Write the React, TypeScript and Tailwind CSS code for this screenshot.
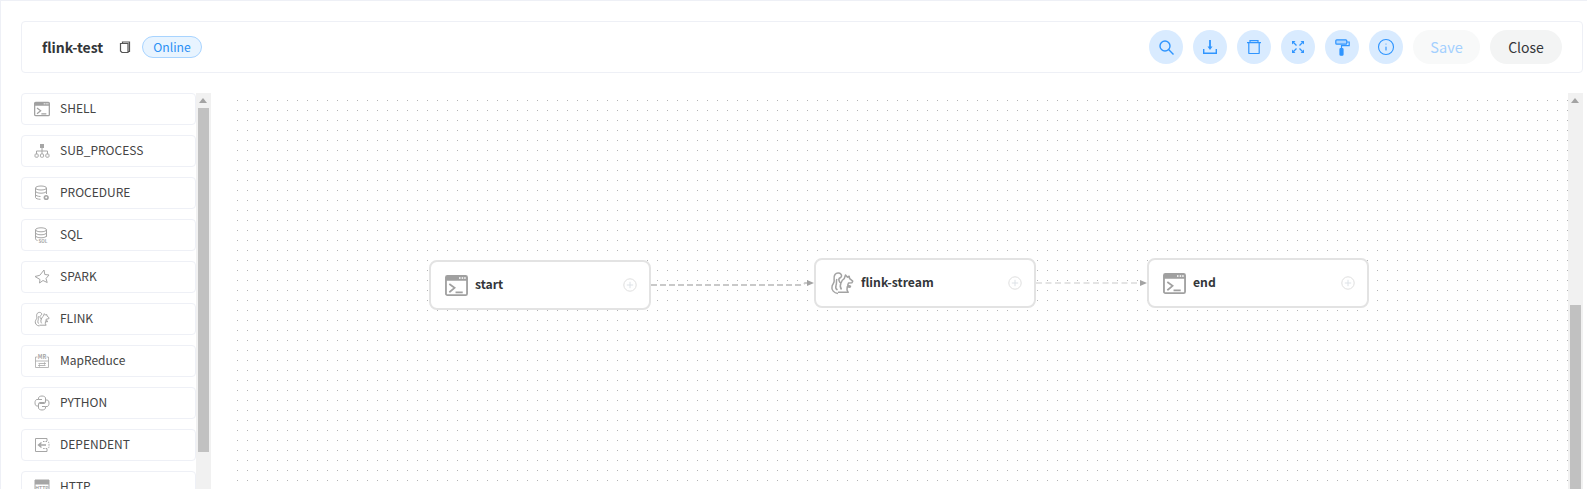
import { Info } from 'lucide-react'
import type { ReactNode } from 'react'

function ToolButton({ children }: { children: ReactNode }) {
  return (
    <button className="w-[34px] h-[34px] rounded-full bg-[#d9ebff] text-[#2f95ff] flex items-center justify-center">
      {children}
    </button>
  )
}

const Ico = ({ children, size = 16 }: { children: ReactNode; size?: number }) => (
  <svg width={size} height={size} viewBox="0 0 16 16" fill="none" stroke="#a6a6a6" strokeWidth="1" className="shrink-0">
    {children}
  </svg>
)

const ShellIcon = ({ size = 16 }: { size?: number }) => (
  <svg width={size} height={size} viewBox="0 0 24 24" className="shrink-0">
    <rect x="1" y="2" width="22" height="20" rx="1.500" fill="none" stroke="#a0a0a0" strokeWidth="1.900" />
    <path d="M1 3.500A1.500 1.500 0 0 1 2.500 2h19A1.500 1.500 0 0 1 23 3.500V7H1z" fill="#a0a0a0" />
    <rect x="14.600" y="3.400" width="1.600" height="1.600" fill="#fff" />
    <rect x="17.400" y="3.400" width="1.600" height="1.600" fill="#fff" />
    <rect x="20" y="3.400" width="1.600" height="1.600" fill="#fff" />
    <path d="M4.500 10.500l5.500 4-5.500 4.500M11 19.200h7.500" fill="none" stroke="#a0a0a0" strokeWidth="1.800" />
  </svg>
)

const SquirrelIcon = ({ size = 16 }: { size?: number }) => (
  <svg width={size} height={size} viewBox="0 0 24 24" fill="none" stroke="#a3a3a3" strokeWidth="1.500" strokeLinejoin="round" className="shrink-0">
    <path d="M8 22.500C4 22 1.200 19 2 15.500c.5-2.500 2.500-3.500 2.200-6C4 7 3.500 5.500 5 3.500 6.500 1.800 9.500 1.500 11 3.200c1 1.200.6 3-.7 3.500-1.300.5-1.700 1.600-1.300 2.800.4 1.300 1 2.300 2 2.500" />
    <path d="M11 12c.6-2 1.800-3.500 3.200-4.300L15.500 4l2 2.200 1.600-1 .6 2.500 3 2.500-.7 1.600-3.500.3-.8 2.200 2.800.8-.5 1.200-2.800-.5-.2 3.200 1.200 2.300H8" />
    <path d="M6.800 8c-.8 3 .2 4-.8 6.500-.6 1.800-.2 3.500 1.500 4.500M11 12c-1 2-1 4.500.5 6.500" />
  </svg>
)

const icons: Record<string, ReactNode> = {
  shell: <ShellIcon />,
  sub: (
    <Ico>
      <rect x="6" y="1" width="4" height="4" fill="#a6a6a6" stroke="none" />
      <path d="M8 5v3M2.500 11V8h11v3M8 8v3" />
      <rect x="1" y="11" width="3.200" height="3.200" rx=".8" />
      <rect x="6.400" y="11" width="3.200" height="3.200" rx=".8" />
      <rect x="11.800" y="11" width="3.200" height="3.200" rx=".8" />
    </Ico>
  ),
  procedure: (
    <Ico>
      <ellipse cx="7" cy="3" rx="5.500" ry="2" />
      <path d="M1.500 3v9.500c0 1 2.500 1.800 5 1.800M12.500 3v6M1.500 6.200c0 1 2.500 2 5.500 2s5.500-1 5.500-2M1.500 9.500c0 1 2.500 2 5 2" />
      <circle cx="12.200" cy="12.500" r="2.600" fill="#a6a6a6" stroke="none" />
      <circle cx="12.200" cy="12.500" r="1" fill="#fff" stroke="none" />
    </Ico>
  ),
  sql: (
    <Ico>
      <ellipse cx="7" cy="2.800" rx="5.500" ry="2" />
      <path d="M1.500 2.800v9c0 .8 1 1.500 2 1.700M12.500 2.800v7M1.500 5.800c0 1 2.500 2 5.500 2s5.500-1 5.500-2M1.500 8.800c0 1 2.500 2 5.500 2s5.500-1 5.500-2" />
      <text x="4.500" y="15.500" fontSize="4.500" fontWeight="700" fill="#a6a6a6" stroke="none">SQL</text>
    </Ico>
  ),
  spark: (
    <Ico>
      <path d="M10 1l.8 4.500L15 6l-3 3.500 1.200 4-4.200-2-3.500 2.500V14l.5-3.500L1 7.500l4.800-1.200z" />
    </Ico>
  ),
  flink: <SquirrelIcon />,
  mr: (
    <Ico>
      <path d="M1.500 4v10.500h13V4M1.500 4h2M12.500 4h2M1.500 8h13M4.500 10.500h7M10 9.500l1.500 1-1.500 1M4.500 12.500h7M6 11.500l-1.500 1 1.500 1" strokeWidth=".8" />
      <text x="8" y="6" textAnchor="middle" fontSize="5.500" fontWeight="700" fill="#a6a6a6" stroke="none">MR</text>
    </Ico>
  ),
  python: (
    <Ico>
      <path d="M5.500 7.500h4.500c1 0 1.500-.7 1.500-1.500V3c0-1-1.500-2-3.500-2S4.500 2 4.500 3v1.500H8M4.500 4.500H3c-1.200 0-2 1.300-2 3.300s.8 3.200 2 3.200h1.500V9c0-.8.5-1.500 1-1.500" />
      <path d="M10.500 8.500H6c-1 0-1.500.7-1.500 1.500v3c0 1 1.500 2 3.500 2s3.500-1 3.500-2v-1.500H8M11.500 11.500H13c1.200 0 2-1.300 2-3.300S14.200 5 13 5h-1.500v2c0 .8-.5 1.500-1 1.500" />
    </Ico>
  ),
  dep: (
    <Ico>
      <path d="M13 4V1.500H1.500v13H13V12" />
      <path d="M9 4.500h4a2 2 0 0 1 2 2v3a2 2 0 0 1-2 2H9" strokeDasharray="1.500 1" />
      <path d="M12 8H5M7.500 5.500L4.500 8l3 2.500" strokeWidth="1.400" />
    </Ico>
  ),
  http: (
    <Ico>
      <path d="M1 1h14v4H1z" fill="#a6a6a6" />
      <path d="M1 5v10h14V5" />
      <text x="8" y="11" textAnchor="middle" fontSize="5" fontWeight="700" fill="#a6a6a6" stroke="none">HTTP</text>
    </Ico>
  ),
}

const tasks = [
  { name: 'SHELL', icon: 'shell' },
  { name: 'SUB_PROCESS', icon: 'sub' },
  { name: 'PROCEDURE', icon: 'procedure' },
  { name: 'SQL', icon: 'sql' },
  { name: 'SPARK', icon: 'spark' },
  { name: 'FLINK', icon: 'flink' },
  { name: 'MapReduce', icon: 'mr' },
  { name: 'PYTHON', icon: 'python' },
  { name: 'DEPENDENT', icon: 'dep' },
  { name: 'HTTP', icon: 'http' },
]

function ScrollBar({ thumb }: { thumb: string }) {
  return (
    <div className="w-[15px] shrink-0 bg-[#f1f1f1] relative h-[500px]">
      <div className="absolute left-[3px] top-[5px] w-0 h-0 border-x-[4px] border-x-transparent border-b-[5px] border-b-[#a3a3a3]" />
      <div className={thumb} />
    </div>
  )
}

function FlowNode({ name, pos, icon }: { name: string; pos: string; icon: ReactNode }) {
  return (
    <div className={`absolute w-[222px] h-[50px] bg-white border-2 border-[#e3e3e3] rounded-[8px] flex items-center pl-[14px] pr-[12px] ${pos}`}>
      {icon}
      <span className="ml-[7px] pb-[2px] text-[12.200px] font-semibold text-[#333639]">{name}</span>
      <svg width="14" height="14" viewBox="0 0 14 14" className="ml-auto" fill="none">
        <circle cx="7" cy="7" r="6.200" stroke="#dfdfdf" />
        <path d="M7 3.800v6.400M3.800 7h6.400" stroke="#dde2e7" />
      </svg>
    </div>
  )
}

export default function App() {
  return (
    <div
      className="h-[489px] overflow-hidden bg-white border-t border-l border-[#eef0f6] pt-5 pl-5 pr-[4px] text-[#333639]"
      style={{ fontFamily: '"Noto Sans CJK SC", "Noto Sans", sans-serif' }}
    >
      <div className="h-[52px] border border-[#eef0f6] rounded-[4px] flex items-center pl-5 pr-5">
        <span className="text-[14px] font-semibold text-[#333639]">flink-test</span>
        <svg width="12" height="13" viewBox="0 0 12 13" fill="none" stroke="#555" strokeWidth="1.200" className="ml-[16px]">
          <path d="M3.500 2V1h7v9.500H9" />
          <path d="M1.500 2.500h7.500v9H3l-1.500-1.500z" />
        </svg>
        <span className="ml-[11px] h-[22px] px-[10px] rounded-full border border-[#a8d4ff] bg-[#e8f4ff] text-[#2b90f5] text-[12.200px] flex items-center">
          Online
        </span>
        <div className="ml-auto flex items-center gap-[10px]">
          <ToolButton>
            <svg width="15" height="15" viewBox="0 0 15 15" fill="none" stroke="currentColor" strokeWidth="1.400">
              <circle cx="6" cy="6" r="5" />
              <path d="M9.600 9.600L14.500 14.500" />
            </svg>
          </ToolButton>
          <ToolButton>
            <svg width="14" height="14" viewBox="0 0 14 14" fill="none" stroke="currentColor" strokeWidth="1.400">
              <path d="M7 0v8" strokeWidth="1.800" />
              <path d="M4.500 6.500h5L7 10z" fill="currentColor" stroke="none" />
              <path d="M.7 9v4.200h12.600V9" />
            </svg>
          </ToolButton>
          <ToolButton>
            <svg width="14" height="14" viewBox="0 0 14 14" fill="none" stroke="currentColor" strokeWidth="1.200">
              <path d="M0 2.600h14M3 2.600V.6h8v2" />
              <path d="M1.800 2.600v10.400c0 .3.200.5.500.5h9.400c.3 0 .5-.2.500-.5V2.600" />
            </svg>
          </ToolButton>
          <ToolButton>
            <svg width="12" height="12" viewBox="0 0 12 12" fill="currentColor" stroke="currentColor">
              <path d="M0 3.500V0h3.500zM12 3.500V0H8.500zM0 8.500V12h3.500zM12 8.500V12H8.500z" stroke="none" />
              <path d="M1.500 1.500l3 3M10.500 1.500l-3 3M1.500 10.500l3-3M10.500 10.500l-3-3" strokeWidth="1.300" />
            </svg>
          </ToolButton>
          <ToolButton>
            <svg width="15" height="17" viewBox="0 0 15 17" fill="none" stroke="currentColor" strokeWidth="1.200">
              <rect x=".8" y=".8" width="11" height="4.400" rx="1" fill="currentColor" fillOpacity=".25" />
              <path d="M11.800 3h2.400v3.700H6.500V9.500" />
              <rect x="5" y="9.500" width="3" height="6.700" rx=".8" fill="currentColor" />
            </svg>
          </ToolButton>
          <ToolButton><Info size={18} strokeWidth={1.500} /></ToolButton>
          <button className="w-[67px] h-[34px] rounded-full bg-[#f8f9f9] text-[#a3d0ff] text-[14.500px]">Save</button>
          <button className="w-[72px] h-[34px] rounded-full bg-[#f3f4f4] text-[#333639] text-[14px]">Close</button>
        </div>
      </div>

      <div className="mt-5 flex">
        <div className="w-[175px] shrink-0 flex flex-col gap-[10px]">
          {tasks.map((t) => (
            <div
              key={t.name}
              className="h-[32px] shrink-0 border border-[#eef0f6] rounded-[4px] flex items-center pl-[12px] gap-[10px] text-[12px] text-[#444]"
            >
              {icons[t.icon]}
              <span className="pb-[2px]">{t.name}</span>
            </div>
          ))}
        </div>
        <ScrollBar thumb="absolute left-[2px] top-[15px] w-[11px] h-[344px] bg-[#c1c1c1]" />

        <div className="flex-1 ml-[26px] mt-[7px] relative h-[400px] bg-[conic-gradient(at_1px_1px,transparent_75%,#b4b4b4_0)] bg-[size:10px_10px]">
          <svg className="absolute left-0 top-0" width="1331" height="300" fill="none">
            <path d="M414 185H563Q566 185 568 183H571" stroke="#c9c9c9" strokeWidth="1.800" strokeDasharray="6 3" />
            <path d="M570 180l7 3-7 3z" fill="#a3a3a3" />
            <path d="M799 183H904" stroke="#c9c9c9" strokeWidth="1.200" strokeDasharray="6 3.500" />
            <path d="M903 180l7 3-7 3z" fill="#a3a3a3" />
          </svg>
          <FlowNode name="start" pos="left-[192px] top-[160px]" icon={<ShellIcon size={23} />} />
          <FlowNode name="flink-stream" pos="left-[577px] top-[158px]" icon={<SquirrelIcon size={24} />} />
          <FlowNode name="end" pos="left-[910px] top-[158px]" icon={<ShellIcon size={23} />} />
        </div>
        <ScrollBar thumb="absolute left-[2px] top-[212px] w-[11px] h-[300px] bg-[#c1c1c1]" />
      </div>
    </div>
  )
}
